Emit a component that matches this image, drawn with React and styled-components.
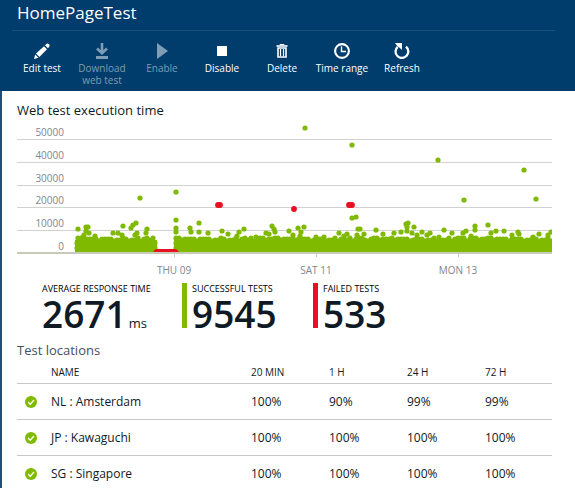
import React from "react";
import styled, { createGlobalStyle } from "styled-components";

const GlobalStyle = createGlobalStyle`
  *, *::before, *::after { box-sizing: border-box; }
  body {
    margin: 0;
    background: #ffffff;
    color: #0f1a24;
    font-family: "Open Sans", "Noto Sans", sans-serif;
    font-size: 12px;
  }
`;

const Blade = styled.div`
  display: flex;
  flex-direction: column;
  min-height: 100vh;
`;

const Header = styled.header`
  background: #003c6c;
  color: #ffffff;
  padding: 0 20px 0 12px;
`;

const Title = styled.h1`
  margin: 0;
  padding: 0 5px 4px;
  font-size: 17px;
  line-height: 26px;
  font-weight: 400;
  border-bottom: 1px solid #1d5079;
`;

const Toolbar = styled.div`
  display: flex;
  height: 60px;
  padding-top: 12px;
`;

const Command = styled.button`
  display: flex;
  flex-direction: column;
  align-items: center;
  width: 60px;
  padding: 0;
  border: 0;
  background: none;
  color: #ffffff;
  font-family: inherit;
  font-size: 10px;
  font-weight: 500;
  line-height: 12px;
  text-align: center;
  white-space: pre-line;
  cursor: pointer;

  &:disabled {
    color: #7f9db5;
    cursor: default;
  }

  svg {
    display: block;
    flex: none;
    margin-bottom: 3px;
  }
`;

const Content = styled.main`
  flex: 1;
  padding: 9px 23px 0 15px;
  border-left: 2px solid #1d4f7c;
`;

const Heading = styled.h2`
  margin: 0;
  font-size: 13px;
  line-height: 20px;
  font-weight: 400;
  color: ${(p) => (p.$muted ? "#44505b" : "#0f1a24")};
`;

const Chart = styled.svg`
  display: block;
  width: 100%;
  height: auto;

  text {
    font-size: 10px;
    fill: #80868c;
  }
`;

const Stats = styled.dl`
  display: grid;
  grid-template-columns: 140px 131px auto;
  margin: 6px 0 12px;
  padding-left: 25px;
`;

const Stat = styled.div`
  height: 45px;
  border-left: ${(p) => (p.$bar ? `5px solid ${p.$bar}` : "0")};
  padding-left: ${(p) => (p.$bar ? "5px" : "0")};
  white-space: nowrap;
`;

const StatLabel = styled.dt`
  font-size: 9px;
  line-height: 11px;
  font-weight: 500;
  color: #000000;
`;

const StatValue = styled.dd`
  margin: 0;
  font-size: 37px;
  line-height: 40px;
  font-weight: 600;
`;

const Unit = styled.span`
  margin-left: 2px;
  font-size: 13px;
  font-weight: 400;
`;

const Table = styled.table`
  width: 100%;
  border-collapse: collapse;
  table-layout: fixed;
  text-align: left;

  th, td {
    padding: 0;
    font-weight: 400;
  }

  thead th {
    height: 23px;
    padding-top: 2px;
    font-size: 10px;
    line-height: 12px;
  }

  tbody tr {
    border-top: 1px solid #c8c8c8;
  }

  tbody th, tbody td {
    height: 36px;
    padding-top: 2px;
    line-height: 16px;
  }

  tbody tr:last-child > * {
    height: 32px;
    padding-top: 6px;
  }

  svg { display: block; margin-left: 8px; }
`;

const Column = styled.col`
  width: ${(p) => p.$width};
`;

const PencilIcon = () => (
  <svg width="16" height="16" viewBox="0 0 16 16" fill="currentColor" aria-hidden="true">
    <path d="M0 16 1.2 11.6 4.4 14.8Z" />
    <path d="M2 10.6 10 3.2 13 6.2 5.4 14Z" />
    <path d="M11 2.3 12.7.8Q13.7 0 14.8 1.1 16.2 2.4 15.3 3.5L14 5.2Z" />
  </svg>
);

const DownloadIcon = () => (
  <svg width="16" height="16" viewBox="0 0 16 16" aria-hidden="true">
    <path d="M8 0V10M3 5.5 8 10.3 13 5.5" fill="none" stroke="currentColor" strokeWidth="2.6" />
    <path d="M2 13H14V16H2Z" fill="currentColor" />
  </svg>
);

const PlayIcon = () => (
  <svg width="16" height="16" viewBox="0 0 16 16" fill="currentColor" aria-hidden="true">
    <path d="M3 0 14 8 3 16Z" />
  </svg>
);

const StopIcon = () => (
  <svg width="16" height="16" viewBox="0 0 16 16" fill="currentColor" aria-hidden="true">
    <path d="M3 3H13V13H3Z" />
  </svg>
);

const TrashIcon = () => (
  <svg width="16" height="16" viewBox="0 0 16 16" fill="none" stroke="currentColor" aria-hidden="true">
    <path d="M2.5 3H13.5" strokeWidth="1.6" />
    <path d="M6 2V1.5H10V2" />
    <path d="M4 5V14H12V5Z" strokeWidth="1.6" />
    <path d="M6.5 6V13M9.5 6V13" strokeWidth="1.2" />
  </svg>
);

const ClockIcon = () => (
  <svg width="16" height="16" viewBox="0 0 16 16" fill="none" stroke="currentColor" aria-hidden="true">
    <circle cx="8" cy="8" r="6.9" strokeWidth="2.1" />
    <path d="M7.5 3.5V8.5H12" strokeWidth="1.4" />
  </svg>
);

const RefreshIcon = () => (
  <svg width="16" height="16" viewBox="0 0 16 16" aria-hidden="true">
    <path d="M3.6 3.8A6.4 6.4 0 1 0 12 3.6" fill="none" stroke="currentColor" strokeWidth="2.3" />
    <path d="M1 0H8V7L5.6 4.8 3.4 3.2Z" fill="currentColor" />
  </svg>
);

const CheckIcon = () => (
  <svg width="12" height="12" viewBox="0 0 12 12" role="img" aria-label="Passed">
    <circle cx="6" cy="6" r="6" fill="#7fba00" />
    <path d="M3 6 5.2 8.2 9 4" fill="none" stroke="#ffffff" strokeWidth="1.4" />
  </svg>
);

const commands = [
  { label: "Edit test", Icon: PencilIcon },
  { label: "Download\nweb test", Icon: DownloadIcon, disabled: true },
  { label: "Enable", Icon: PlayIcon, disabled: true },
  { label: "Disable", Icon: StopIcon },
  { label: "Delete", Icon: TrashIcon },
  { label: "Time range", Icon: ClockIcon },
  { label: "Refresh", Icon: RefreshIcon },
];

const GREEN = "#7fba00";
const RED = "#e81123";

const gridLines = [
  { label: "50000", y: 19 },
  { label: "40000", y: 42 },
  { label: "30000", y: 65 },
  { label: "20000", y: 87 },
  { label: "10000", y: 110 },
  { label: "0", y: 133 },
];

const days = [
  { label: "THU 09", x: 157 },
  { label: "SAT 11", x: 299 },
  { label: "MON 13", x: 441 },
];

const passed = [
  [123, 78], [159, 72], [61, 109], [69, 107], [71, 107], [69, 111], [67, 115], [72, 113],
  [66, 117], [78, 116], [96, 113], [101, 113], [106, 106], [114, 108], [116, 105], [119, 103],
  [105, 115], [118, 115], [120, 113], [130, 109], [129, 113], [159, 100], [159, 108], [159, 112],
  [173, 108], [174, 112], [182, 103], [182, 112], [191, 113], [288, 8], [335, 25], [335, 98],
  [339, 97], [205, 111], [211, 114], [220, 116], [222, 112], [227, 109], [249, 113], [252, 114],
  [255, 106], [257, 109], [258, 112], [272, 111], [276, 115], [281, 108], [287, 107], [284, 112],
  [283, 116], [239, 117], [299, 117], [307, 117], [322, 113], [327, 116], [330, 114], [341, 109],
  [343, 109], [340, 115], [347, 114], [359, 110], [366, 114], [421, 40], [507, 50], [447, 80],
  [519, 79], [377, 113], [384, 112], [389, 104], [391, 103], [390, 107], [390, 111], [397, 107],
  [395, 113], [405, 112], [413, 113], [422, 117], [427, 110], [435, 113], [446, 113], [449, 111],
  [454, 116], [458, 106], [458, 110], [471, 105], [479, 111], [474, 113], [487, 111], [495, 115],
  [501, 112], [502, 114], [516, 117], [522, 114], [531, 115], [534, 112], [400, 115], [410, 115],
];

const failed = [[201, 85], [203, 85], [277, 89], [332, 85], [335, 85], [333, 85]];

const jitter = [0, 2, 1, 3, 1, 0, 2, 1, 1, 3, 2, 0, 1];

function crowd(from, to) {
  const dots = [];
  for (let x = from, i = 0; x <= to; x += 3, i += 1) {
    dots.push([x, 118 + jitter[(i * 5 + (i >> 3)) % jitter.length]]);
  }
  return dots;
}

const dense = [...crowd(61, 137), ...crowd(159, 534), [60, 123], [60, 128], [138, 123], [138, 128], [159, 123], [159, 128]];

function ExecutionChart() {
  return (
    <Chart viewBox="0 0 535 157" role="img" aria-label="Web test execution time">
      <clipPath id="plot">
        <rect x="0" y="0" width="535" height="132" />
      </clipPath>
      {gridLines.map(({ label, y }) => (
        <React.Fragment key={label}>
          <path d={`M0 ${y}.5H535`} stroke="#d2d2d2" strokeWidth="1" />
          <text x="47" y={y - 3} textAnchor="end">{label}</text>
        </React.Fragment>
      ))}
      <g clipPath="url(#plot)">
        <g fill={GREEN}>
          <path d="M58 120H140V132H58ZM157 120H535V132H157Z" />
          {[...dense, ...passed].map(([x, y], i) => (
            <circle key={i} cx={x} cy={y} r="2.6" />
          ))}
        </g>
        <g fill={RED}>
          {failed.map(([x, y], i) => (
            <circle key={i} cx={x} cy={y} r="2.9" />
          ))}
          <path d="M136 133Q137 129 140 129H158Q161 129 162 133Z" />
        </g>
      </g>
      <path d="M0 133H535" stroke="#c8cbb8" strokeWidth="2" />
      {days.map(({ label, x }) => (
        <React.Fragment key={label}>
          <path d={`M${x}.5 134V137`} stroke="#c8c8c8" />
          <text x={x} y="154" textAnchor="middle">{label}</text>
        </React.Fragment>
      ))}
    </Chart>
  );
}

const locations = [
  { name: "NL : Amsterdam", rates: ["100%", "90%", "99%", "99%"] },
  { name: "JP : Kawaguchi", rates: ["100%", "100%", "100%", "100%"] },
  { name: "SG : Singapore", rates: ["100%", "100%", "100%", "100%"] },
];

export default function App() {
  return (
    <>
      <GlobalStyle />
      <Blade>
        <Header>
          <Title>HomePageTest</Title>
          <Toolbar role="toolbar" aria-label="Web test commands">
            {commands.map(({ label, Icon, disabled }) => (
              <Command key={label} type="button" disabled={disabled}>
                <Icon />
                {label}
              </Command>
            ))}
          </Toolbar>
        </Header>
        <Content>
          <Heading>Web test execution time</Heading>
          <ExecutionChart />
          <Stats>
            <Stat>
              <StatLabel>AVERAGE RESPONSE TIME</StatLabel>
              <StatValue>2671<Unit>ms</Unit></StatValue>
            </Stat>
            <Stat $bar={GREEN}>
              <StatLabel>SUCCESSFUL TESTS</StatLabel>
              <StatValue>9545</StatValue>
            </Stat>
            <Stat $bar={RED}>
              <StatLabel>FAILED TESTS</StatLabel>
              <StatValue>533</StatValue>
            </Stat>
          </Stats>
          <Heading $muted id="locations">Test locations</Heading>
          <Table aria-labelledby="locations">
            <colgroup>
              <Column $width="34px" />
              <Column />
              <Column $width="78px" />
              <Column $width="78px" />
              <Column $width="78px" />
              <Column $width="67px" />
            </colgroup>
            <thead>
              <tr>
                <th aria-label="Status" />
                <th scope="col">NAME</th>
                <th scope="col">20 MIN</th>
                <th scope="col">1 H</th>
                <th scope="col">24 H</th>
                <th scope="col">72 H</th>
              </tr>
            </thead>
            <tbody>
              {locations.map(({ name, rates }) => (
                <tr key={name}>
                  <td><CheckIcon /></td>
                  <th scope="row">{name}</th>
                  {rates.map((rate, i) => (
                    <td key={i}>{rate}</td>
                  ))}
                </tr>
              ))}
            </tbody>
          </Table>
        </Content>
      </Blade>
    </>
  );
}
